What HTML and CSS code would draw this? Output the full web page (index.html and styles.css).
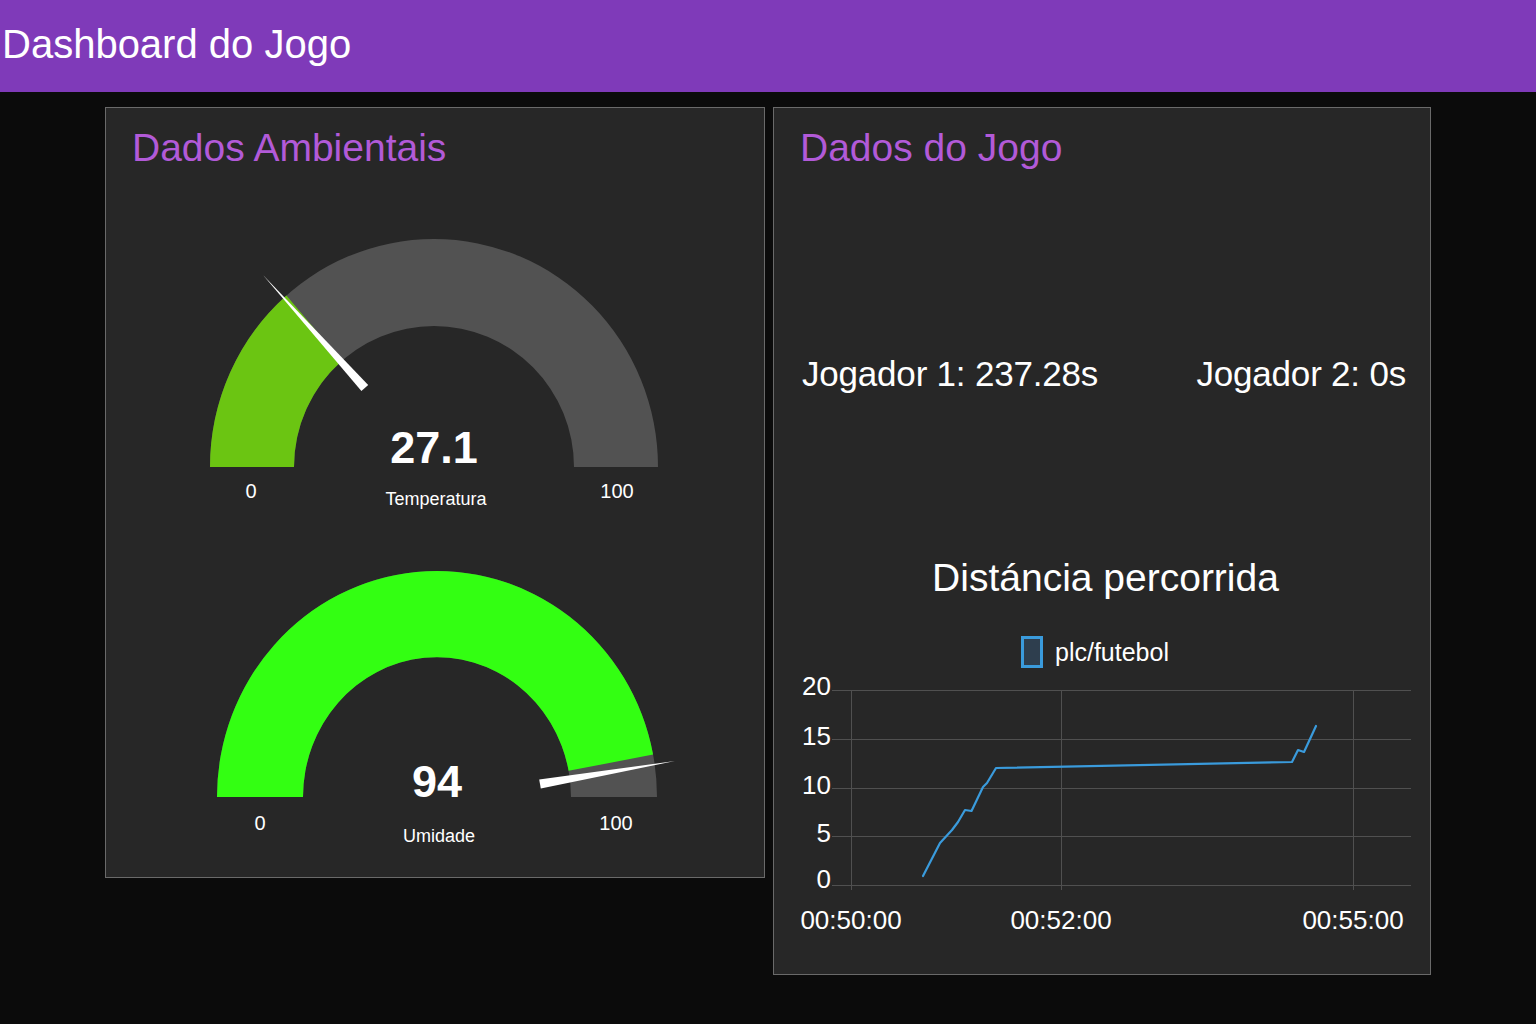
FILE: index.html
```html
<!DOCTYPE html>
<html lang="pt">
<head>
<meta charset="utf-8">
<title>Dashboard do Jogo</title>
<link rel="stylesheet" href="styles.css">
</head>
<body>
<header class="topbar">Dashboard do Jogo</header>
<main class="grid">
  <section class="card card-env">
    <h2 class="card-title">Dados Ambientais</h2>
    <svg class="gauge gauge-temp" viewBox="0 0 658 350" width="658" height="350">
      <path class="g-bg" d="M104 300 A224 228 0 0 1 552 300 L468 300 A140 141 0 0 0 188 300 Z"/>
      <path class="g-fill-temp" d="M104 300 A224 228 0 0 1 180.4 128.5 L235.7 194 A140 141 0 0 0 188 300 Z"/>
      <polygon class="g-needle" points="262.2,218 255.4,224 157,108"/>
      <text class="g-value" x="328" y="296" text-anchor="middle">27.1</text>
      <text class="g-label" x="330" y="338" text-anchor="middle">Temperatura</text>
      <text class="g-minmax" x="145" y="331" text-anchor="middle">0</text>
      <text class="g-minmax" x="511" y="331" text-anchor="middle">100</text>
    </svg>
    <svg class="gauge gauge-hum" viewBox="0 0 658 340" width="658" height="340">
      <path class="g-bg" d="M111 280 A220 226 0 0 1 551 280 L465 280 A134 140 0 0 0 197 280 Z"/>
      <path class="g-fill-hum" d="M111 280 A220 226 0 0 1 547.1 237.6 L462.6 253.8 A134 140 0 0 0 197 280 Z"/>
      <polygon class="g-needle" points="434.8,271.4 433.2,262.6 569,244"/>
      <text class="g-value" x="331" y="280" text-anchor="middle">94</text>
      <text class="g-label" x="333" y="325" text-anchor="middle">Umidade</text>
      <text class="g-minmax" x="154" y="313" text-anchor="middle">0</text>
      <text class="g-minmax" x="510" y="313" text-anchor="middle">100</text>
    </svg>
  </section>
  <section class="card card-game">
    <h2 class="card-title">Dados do Jogo</h2>
    <div class="players">
      <span class="player">Jogador 1: 237.28s</span>
      <span class="player">Jogador 2: 0s</span>
    </div>
    <h3 class="chart-title">Distáncia percorrida</h3>
    <div class="legend">
      <span class="legend-box"></span>
      <span class="legend-text">plc/futebol</span>
    </div>
    <svg class="chart" viewBox="0 0 656 306" width="656" height="306">
      <g class="grid-lines">
        <line x1="58" y1="22.5" x2="637" y2="22.5"/>
        <line x1="58" y1="71.5" x2="637" y2="71.5"/>
        <line x1="58" y1="120.5" x2="637" y2="120.5"/>
        <line x1="58" y1="168.5" x2="637" y2="168.5"/>
        <line x1="58" y1="217.5" x2="637" y2="217.5"/>
        <line x1="77.5" y1="22" x2="77.5" y2="222"/>
        <line x1="287.5" y1="22" x2="287.5" y2="222"/>
        <line x1="579.5" y1="22" x2="579.5" y2="222"/>
      </g>
      <g class="axis-text">
        <text x="57" y="27" text-anchor="end">20</text>
        <text x="57" y="77" text-anchor="end">15</text>
        <text x="57" y="126" text-anchor="end">10</text>
        <text x="57" y="174" text-anchor="end">5</text>
        <text x="57" y="220" text-anchor="end">0</text>
        <text x="77" y="261" text-anchor="middle">00:50:00</text>
        <text x="287" y="261" text-anchor="middle">00:52:00</text>
        <text x="579" y="261" text-anchor="middle">00:55:00</text>
      </g>
      <polyline class="series" points="149,208 166,175 178,162 184,154 191,142 197.5,143 209,119 213,115 222,100 518,94 524,82 530,84 542,58"/>
    </svg>
  </section>
</main>
</body>
</html>
```

FILE: styles.css
```css
* { box-sizing: border-box; }
html, body { margin: 0; padding: 0; }
body {
  background: #0b0b0b;
  font-family: "Liberation Sans", Arial, sans-serif;
  color: #ffffff;
  width: 1536px;
  height: 1024px;
  overflow: hidden;
}
.topbar {
  height: 92px;
  background: #7f3ab9;
  color: #ffffff;
  font-size: 40px;
  line-height: 40px;
  padding: 0 0 4px 2px;
  display: flex;
  align-items: center;
}
.grid {
  display: flex;
  align-items: flex-start;
  gap: 8px;
  padding: 15px 0 0 105px;
}
.card {
  background: #272727;
  border: 1px solid #6a6a6a;
  display: flex;
  flex-direction: column;
}
.card-env { width: 660px; padding-bottom: 20px; }
.card-game { width: 658px; }
.card-title {
  margin: 0;
  padding: 20px 0 0 26px;
  font-size: 39px;
  line-height: 39px;
  font-weight: normal;
  color: #b25ad8;
}
.gauge { display: block; }
.g-bg { fill: #525252; }
.g-fill-temp { fill: #6bc512; }
.g-fill-hum { fill: #33ff12; }
.g-needle { fill: #ffffff; }
.g-value {
  fill: #ffffff;
  font-family: "Liberation Sans", Arial, sans-serif;
  font-weight: bold;
  font-size: 45px;
}
.g-label {
  fill: #ffffff;
  font-family: "Liberation Sans", Arial, sans-serif;
  font-size: 18px;
}
.g-minmax {
  fill: #ffffff;
  font-family: "Liberation Sans", Arial, sans-serif;
  font-size: 20px;
}
.players {
  display: flex;
  justify-content: space-between;
  padding: 0 24px 0 28px;
  margin-top: 189px;
  font-size: 35px;
  line-height: 35px;
  letter-spacing: -0.2px;
}
.chart-title {
  margin: 167px 0 0 0;
  text-align: center;
  padding-left: 7px;
  font-size: 39px;
  line-height: 39px;
  font-weight: normal;
  color: #ffffff;
}
.legend {
  margin-top: 39px;
  height: 32px;
  display: flex;
  align-items: center;
  justify-content: center;
  gap: 12px;
  padding-right: 14px;
}
.legend-box {
  width: 22px;
  height: 32px;
  border: 3px solid #3a9bdc;
  background: #2e3e4e;
}
.legend-text {
  font-size: 25px;
  line-height: 25px;
}
.chart { display: block; }
.grid-lines line { stroke: #505050; stroke-width: 1; }
.axis-text text {
  fill: #ffffff;
  font-family: "Liberation Sans", Arial, sans-serif;
  font-size: 26px;
}
.series {
  fill: none;
  stroke: #3a9bdc;
  stroke-width: 2.2;
  stroke-linejoin: round;
  stroke-linecap: round;
}
```
